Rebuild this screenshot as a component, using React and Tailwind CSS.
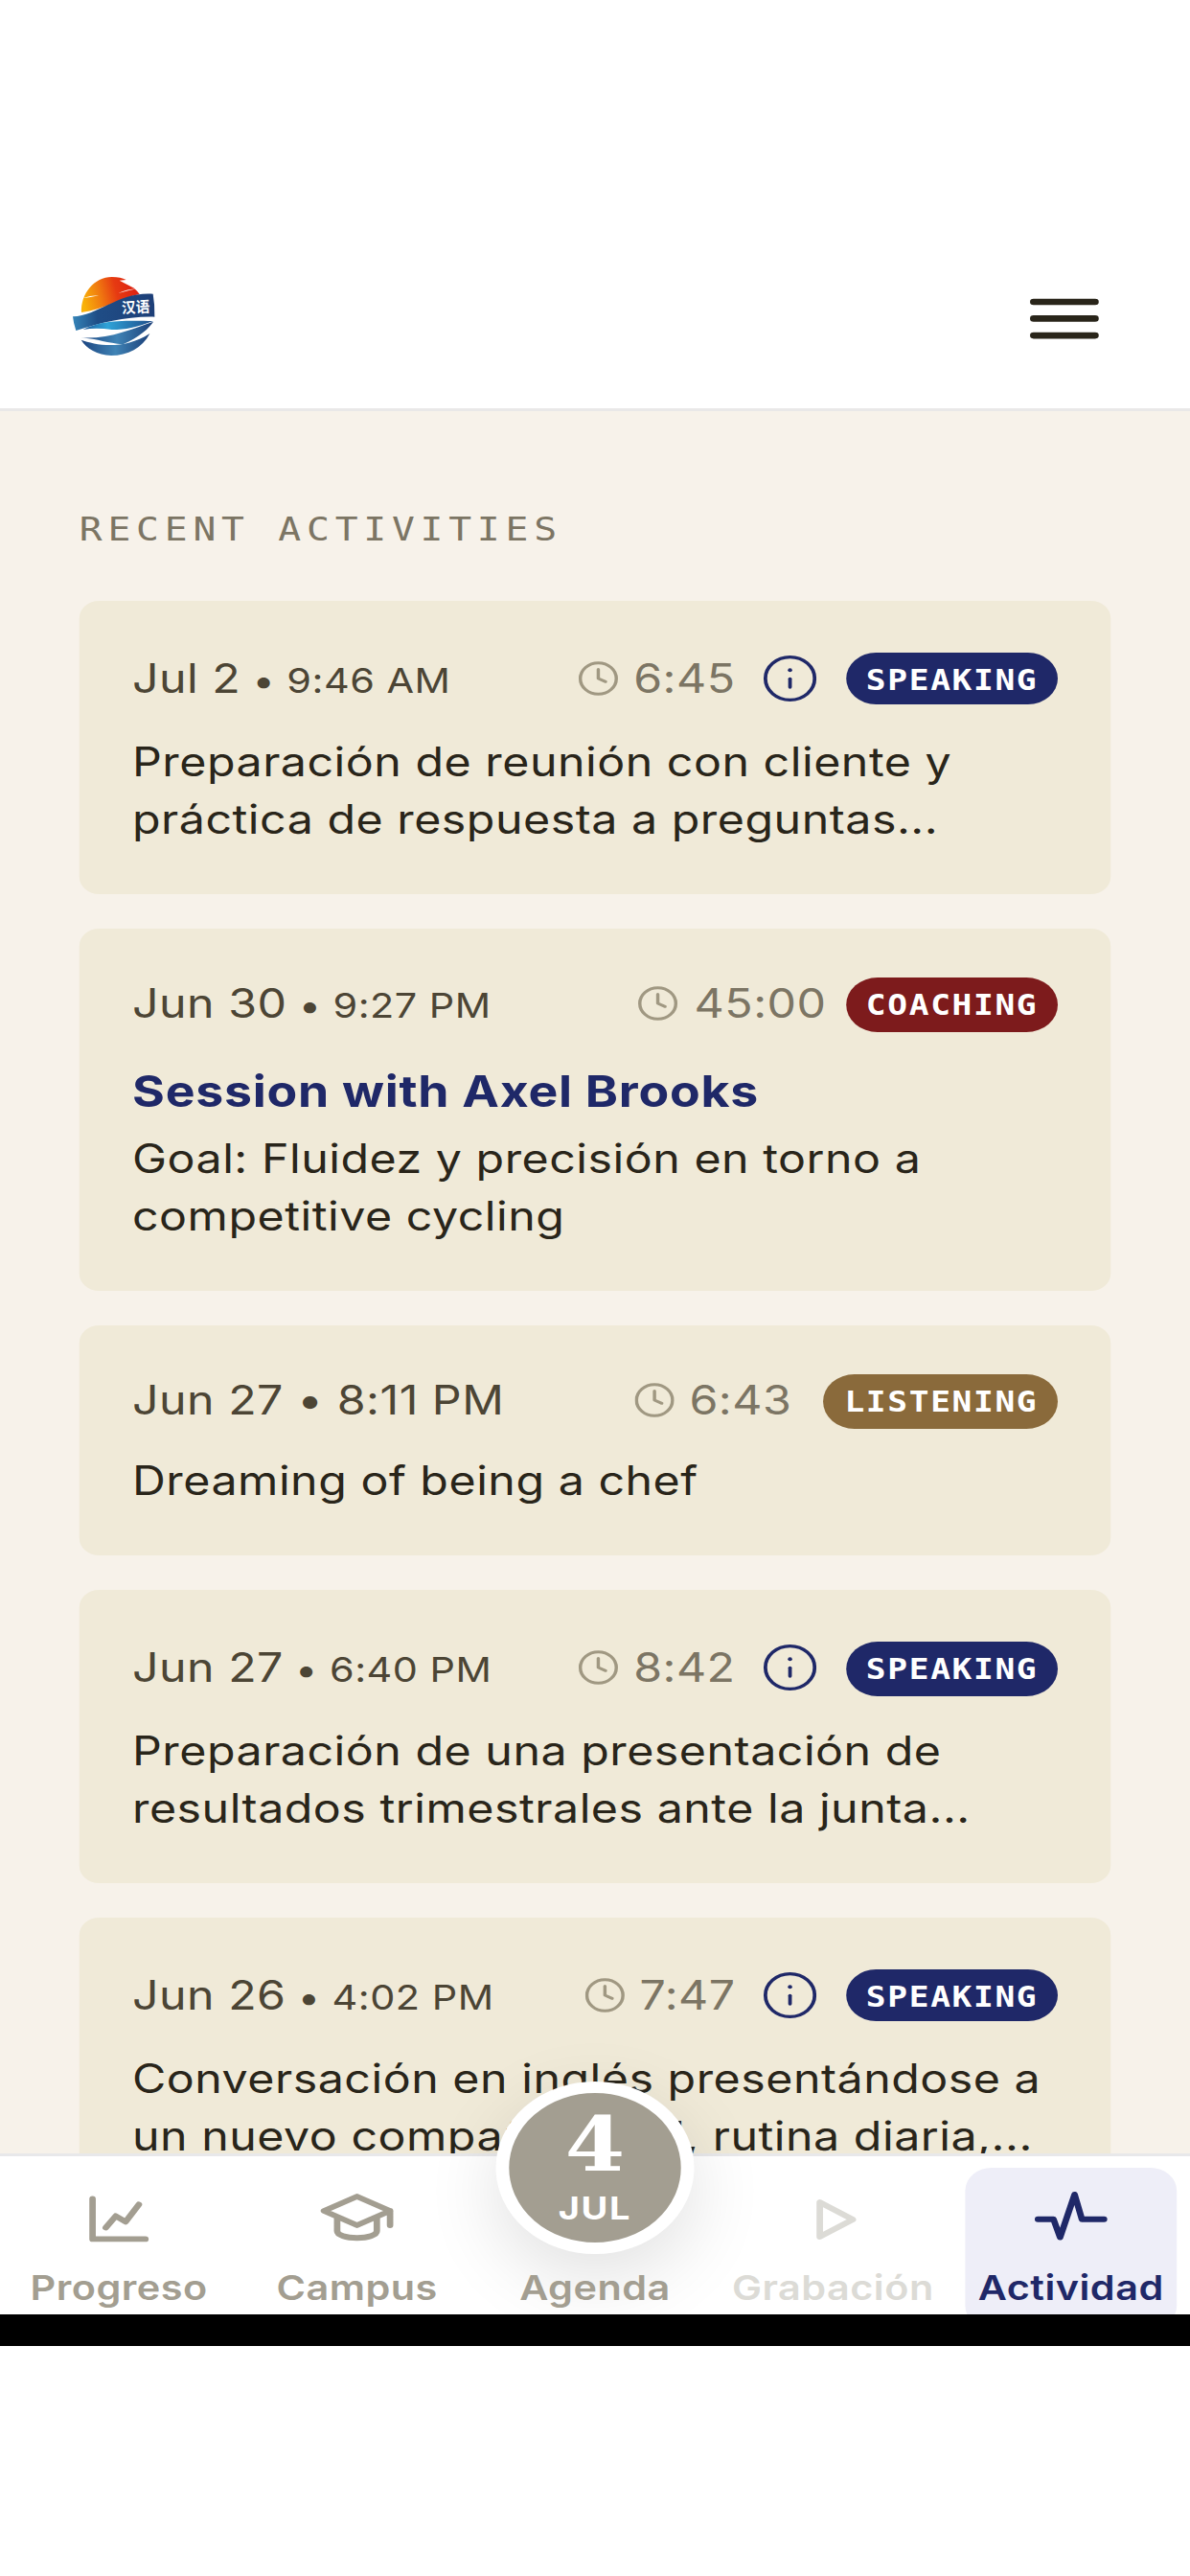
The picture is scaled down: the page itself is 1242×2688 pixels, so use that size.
const activities = [
  { date: "Jul 2", time: "9:46 AM", duration: "6:45", kind: "SPEAKING", lines: ["Preparación de reunión con cliente y", "práctica de respuesta a preguntas..."] },
  { date: "Jun 30", time: "9:27 PM", duration: "45:00", kind: "COACHING", title: "Session with Axel Brooks", lines: ["Goal: Fluidez y precisión en torno a", "competitive cycling"] },
  { date: "Jun 27", time: "8:11 PM", duration: "6:43", kind: "LISTENING", lines: ["Dreaming of being a chef"] },
  { date: "Jun 27", time: "6:40 PM", duration: "8:42", kind: "SPEAKING", lines: ["Preparación de una presentación de", "resultados trimestrales ante la junta..."] },
  { date: "Jun 26", time: "4:02 PM", duration: "7:47", kind: "SPEAKING", lines: ["Conversación en inglés presentándose a", "un nuevo compañero del, rutina diaria,..."] },
];

const badgeColor = {
  SPEAKING: "bg-[#1f2868]",
  COACHING: "bg-[#7d1b1c]",
  LISTENING: "bg-[#8a6a3b]",
};

const durationGap = {
  SPEAKING: "mr-[8.5px]",
  COACHING: "mr-[6px]",
  LISTENING: "mr-[10px]",
};

function Logo() {
  return (
    <svg viewBox="-4 0 360 360" preserveAspectRatio="none" className="h-10 w-[34.8px]">
      <defs>
        <linearGradient id="sun" x1="0" y1="0.5" x2="1" y2="0.35">
          <stop offset="0" stopColor="#f9b208" />
          <stop offset="0.3" stopColor="#f07c10" />
          <stop offset="0.6" stopColor="#e63a12" />
          <stop offset="1" stopColor="#dc1f12" />
        </linearGradient>
        <linearGradient id="band" x1="0" y1="0" x2="1" y2="0">
          <stop offset="0" stopColor="#3484b8" />
          <stop offset="0.3" stopColor="#1f4d86" />
          <stop offset="1" stopColor="#1d3f78" />
        </linearGradient>
        <linearGradient id="wave" x1="0" y1="0" x2="1" y2="0">
          <stop offset="0" stopColor="#1d5a9a" />
          <stop offset="0.35" stopColor="#2fa3d8" />
          <stop offset="1" stopColor="#1d4a88" />
        </linearGradient>
        <linearGradient id="deep" x1="0" y1="0" x2="1" y2="0">
          <stop offset="0" stopColor="#1b4480" />
          <stop offset="0.5" stopColor="#3f83b5" />
          <stop offset="1" stopColor="#1c4079" />
        </linearGradient>
      </defs>
      <path d="M75 168C72 110 115 57 170 57C190 57 203 61 215 66L194 68L240 92Q252 103 257 111C205 120 145 160 75 168Z" fill="url(#sun)" />
      <path d="M78 124Q105 114 129 115Q104 121 78 124ZM190 108Q220 95 248 94Q222 99 190 108Z" fill="#fff" />
      <path d="M48 181C130 178 190 103 299 110Q305 144 304 182C215 180 140 200 58 225Q50 202 48 181Z" fill="url(#band)" />
      <path d="M80 222C130 197 175 192 300 195C245 215 215 222 170 222Q120 215 80 222Z" fill="url(#wave)" />
      <path d="M72 247C165 252 230 220 300 197C290 214 255 247 205 268C155 264 130 252 72 247Z" fill="url(#deep)" />
      <path d="M74 254C120 270 205 288 289 234C265 280 220 303 168 303C125 300 90 282 74 254Z" fill="url(#deep)" />
      <text x="201" y="169" fontSize="47" fontWeight="700" fill="#fff" fontFamily="'Noto Sans CJK SC', sans-serif" textLength="88" lengthAdjust="spacingAndGlyphs" transform="rotate(-3 245 150)">汉语</text>
    </svg>
  );
}

function Clock() {
  return (
    <svg viewBox="0 0 12 12" className="size-3 shrink-0" fill="none" stroke="#a09882" strokeWidth="1" strokeLinecap="round" strokeLinejoin="round">
      <circle cx="6" cy="6" r="5.45" />
      <path d="M6 2.8V6l2.2 1.1" />
    </svg>
  );
}

function Info() {
  return (
    <svg viewBox="0 0 16 16" className="mr-[9px] h-4 w-4 shrink-0" fill="none" stroke="#1f2868" strokeWidth="1.1" strokeLinecap="round">
      <circle cx="8" cy="8" r="7.45" />
      <path d="M8 8.1V11" />
      <path d="M8 5.05v.01" strokeWidth="1.3" />
    </svg>
  );
}

function ActivityCard({ item }) {
  const speaking = item.kind === "SPEAKING";
  return (
    <article className="shrink-0 rounded-md bg-[#f0ead8] p-4">
      <div className={`flex items-center ${speaking ? "mb-2 h-[21.75px]" : "mb-[7.5px] h-[21px]"}`}>
        <div className="text-sm text-[#4c4535]">
          {item.date}
          <span className={item.kind === "LISTENING" ? "text-sm" : "text-xs"}> • {item.time}</span>
        </div>
        <div className="ml-auto flex items-center">
          <Clock />
          <span className={`ml-[4.6px] text-sm text-[#7c7564] ${durationGap[item.kind]}`}>{item.duration}</span>
          {speaking && <Info />}
          <span className={`rounded-full px-1.5 pt-[1.3px] font-['DejaVu_Sans_Mono',monospace] text-[10px] leading-[17.45px] font-bold tracking-[0.48px] text-white ${badgeColor[item.kind]}`}>{item.kind}</span>
        </div>
      </div>
      {item.title && <h2 className="text-[15px] leading-[25.5px] font-bold tracking-[0.22px] text-[#1f2868]">{item.title}</h2>}
      <p className="text-sm leading-5 tracking-[0.15px] whitespace-nowrap text-[#29251a]">
        {item.lines.map((line) => (
          <span key={line} className="block">{line}</span>
        ))}
      </p>
    </article>
  );
}

function NavItem({ label, tone, active, children }) {
  return (
    <div className={`mx-1 flex h-[55.3px] w-16 flex-col items-center rounded-lg pt-[5.4px] ${tone} ${active ? "bg-[#eeeef8]" : ""}`}>
      <svg viewBox="0 0 24 24" className="size-6 shrink-0" fill="none" stroke="currentColor" strokeWidth="1.95" strokeLinecap="round" strokeLinejoin="round">
        {children}
      </svg>
      <span className="mt-[3px] text-xs leading-[18px] font-semibold">{label}</span>
    </div>
  );
}

export default function App() {
  return (
    <div className="h-[2688px] w-[1242px] overflow-hidden bg-white">
      <div className="flex h-[896px] w-[360px] origin-top-left scale-x-[3.45] scale-y-[3] flex-col font-['Inter',sans-serif] tracking-[0.14px]">
        <header className="flex h-[143.2px] shrink-0 items-start justify-between border-b border-[#e9e8e8] pt-[90px] pr-[27px] pl-[17px]">
          <Logo />
          <svg viewBox="0 0 22 16" className="mt-[12.6px] h-4 w-[22px]" fill="none" stroke="#29251a" strokeWidth="2.2" strokeLinecap="round">
            <path d="M1.7 2h18.6M1.7 7.8h18.6M1.7 13.7h18.6" />
          </svg>
        </header>

        <main className="flex h-[606.13px] shrink-0 flex-col gap-3 overflow-hidden bg-[#f7f2ea] px-6 pt-[32px]">
          <h1 className="mb-[4px] shrink-0 font-['DejaVu_Sans_Mono',monospace] text-[11.5px] leading-[18px] tracking-[1.67px] whitespace-nowrap text-[#7c7564]">RECENT ACTIVITIES</h1>
          {activities.map((item) => (
            <ActivityCard key={item.date + item.time} item={item} />
          ))}
        </main>

        <nav className="flex h-[55.67px] shrink-0 border-t border-[#e8e8ea] bg-white pt-[3.9px]">
          <NavItem label="Progreso" tone="text-[#a39e91]">
            <path d="M4 4.8v14h16M8 14.8l3-4 3 2 4-6" />
          </NavItem>
          <NavItem label="Campus" tone="text-[#a39e91]">
            <path d="M12 4 2 9l10 5 10-5-10-5ZM6 11.2V16c0 1.4 2.7 2.4 6 2.4s6-1 6-2.4v-4.8M22 9v5" />
          </NavItem>
          <div className="relative w-[72px] text-center">
            <div className="absolute -top-[30px] left-1.5 flex size-15 flex-col items-center rounded-full border-4 border-white bg-[#a39e91] text-white shadow-[0_8px_24px_rgba(0,0,0,0.12)]">
              <span className="mt-[4.5px] h-[22px] font-['DejaVu_Serif',serif] text-[26px] leading-[26px] font-bold tracking-normal">4</span>
              <span className="mt-[5.2px] text-[11px] leading-[16px] font-bold tracking-[0.5px]">JUL</span>
            </div>
            <span className="relative mt-[32.8px] block text-xs leading-[18px] font-semibold text-[#a39e91]">Agenda</span>
          </div>
          <NavItem label="Grabación" tone="text-[#dcdbd6]">
            <path d="M8 6v12l10-6L8 6Z" />
          </NavItem>
          <NavItem label="Actividad" tone="text-[#1f2868]" active>
            <path d="M2 11.9h4.7l2 6.3L13.1 3.3 15.3 11.9H22" />
          </NavItem>
        </nav>
        <div className="relative h-[11px] shrink-0 bg-black" />
        <div className="relative grow bg-white" />
      </div>
    </div>
  );
}
